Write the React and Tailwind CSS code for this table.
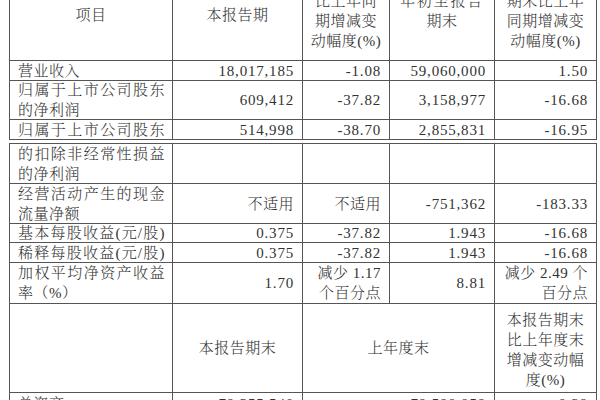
import React from "react";

function Cell({ className = "", children }) {
  return <div className={`border-r border-b border-[#555] ${className}`}>{children}</div>;
}

function Label({ h, lines, top }) {
  return (
    <Cell
      className={`${h} flex flex-col ${top ? "justify-start pt-[1px]" : "justify-center"} pl-[8px] pr-[7px] leading-[20px] tracking-[0.5px] overflow-hidden`}
    >
      {lines.map((l, i) => (
        <div key={i} className={l.full ? "whitespace-nowrap [text-align-last:justify]" : "whitespace-nowrap"}>
          {l.t}
        </div>
      ))}
    </Cell>
  );
}

function Num({ h, children, cjk, top }) {
  return (
    <Cell
      className={`${h} flex ${top ? "items-start pt-[1px]" : "items-center"} justify-end pr-[8px] leading-[20px] whitespace-nowrap ${
        cjk ? "tracking-[0.5px]" : "tracking-[0.8px]"
      }`}
    >
      {children}
    </Cell>
  );
}

function TwoLineRight({ h, a, b }) {
  return (
    <Cell className={`${h} flex flex-col justify-center items-end pr-[8px] leading-[20px] tracking-[0.5px] whitespace-nowrap`}>
      <div>{a}</div>
      <div>{b}</div>
    </Cell>
  );
}

export default function App() {
  return (
    <div className="w-[600px] h-[400px] overflow-hidden bg-white text-[#333] text-[15px] font-light [font-family:'Liberation_Serif','Noto_Serif_CJK_SC','Noto_Sans_CJK_SC',serif]">
      {/* Table 1 */}
      <div className="-mt-[19px] ml-[9px] w-[588px] grid grid-cols-[163px_130px_87px_105px_102px] border-l border-t border-[#555]">
        {/* header */}
        <Cell className="h-[79px] pt-[23px] text-center leading-[20px] tracking-[0.5px]">项目</Cell>
        <Cell className="h-[79px] pt-[23px] text-center leading-[20px] tracking-[0.5px]">本报告期</Cell>
        <Cell className="h-[79px] pt-[9px] text-center leading-[20px] tracking-[0.5px] whitespace-nowrap">
          <div>比上年同</div>
          <div>期增减变</div>
          <div>动幅度(%)</div>
        </Cell>
        <Cell className="h-[79px] pt-[9px] text-center leading-[20px] whitespace-nowrap">
          <div className="tracking-[1.8px]">年初至报告</div>
          <div className="tracking-[0.5px]">期末</div>
        </Cell>
        <Cell className="h-[79px] pt-[9px] text-center leading-[20px] tracking-[0.5px] whitespace-nowrap">
          <div>期末比上年</div>
          <div>同期增减变</div>
          <div>动幅度(%)</div>
        </Cell>

        {/* 营业收入 */}
        <Label h="h-[20px]" lines={[{ t: "营业收入" }]} />
        <Num h="h-[20px]">18,017,185</Num>
        <Num h="h-[20px]">-1.08</Num>
        <Num h="h-[20px]">59,060,000</Num>
        <Num h="h-[20px]">1.50</Num>

        {/* 归属净利润 */}
        <Label h="h-[39px]" lines={[{ t: "归属于上市公司股东", full: true }, { t: "的净利润" }]} />
        <Num h="h-[39px]">609,412</Num>
        <Num h="h-[39px]">-37.82</Num>
        <Num h="h-[39px]">3,158,977</Num>
        <Num h="h-[39px]">-16.68</Num>

        {/* 归属于上市公司股东 */}
        <Label h="h-[20px]" lines={[{ t: "归属于上市公司股东", full: true }]} />
        <Num h="h-[20px]">514,998</Num>
        <Num h="h-[20px]">-38.70</Num>
        <Num h="h-[20px]">2,855,831</Num>
        <Num h="h-[20px]">-16.95</Num>
      </div>

      {/* Table 2 */}
      <div className="mt-[3px] ml-[9px] w-[588px] grid grid-cols-[163px_130px_87px_105px_102px] border-l border-t border-[#555]">
        <Label h="h-[40px]" lines={[{ t: "的扣除非经常性损益", full: true }, { t: "的净利润" }]} />
        <Cell className="h-[40px]" />
        <Cell className="h-[40px]" />
        <Cell className="h-[40px]" />
        <Cell className="h-[40px]" />

        <Label h="h-[40px]" lines={[{ t: "经营活动产生的现金", full: true }, { t: "流量净额" }]} />
        <Num h="h-[40px]" cjk>不适用</Num>
        <Num h="h-[40px]" cjk>不适用</Num>
        <Num h="h-[40px]">-751,362</Num>
        <Num h="h-[40px]">-183.33</Num>

        <Label h="h-[19px]" lines={[{ t: "基本每股收益(元/股)", full: true }]} />
        <Num h="h-[19px]">0.375</Num>
        <Num h="h-[19px]">-37.82</Num>
        <Num h="h-[19px]">1.943</Num>
        <Num h="h-[19px]">-16.68</Num>

        <Label h="h-[20px]" lines={[{ t: "稀释每股收益(元/股)", full: true }]} />
        <Num h="h-[20px]">0.375</Num>
        <Num h="h-[20px]">-37.82</Num>
        <Num h="h-[20px]">1.943</Num>
        <Num h="h-[20px]">-16.68</Num>

        <Label h="h-[41px]" lines={[{ t: "加权平均净资产收益", full: true }, { t: "率（%）" }]} />
        <Num h="h-[41px]">1.70</Num>
        <TwoLineRight h="h-[41px]" a="减少 1.17" b="个百分点" />
        <Num h="h-[41px]">8.81</Num>
        <TwoLineRight h="h-[41px]" a="减少 2.49 个" b="百分点" />

        {/* header 2 */}
        <Cell className="h-[89px]" />
        <Cell className="h-[89px] flex items-center justify-center tracking-[0.5px] leading-[20px]">本报告期末</Cell>
        <Cell className="col-span-2 h-[89px] flex items-center justify-center tracking-[0.5px] leading-[20px]">上年度末</Cell>
        <Cell className="h-[89px] pt-[6px] text-center leading-[20px] tracking-[0.5px] whitespace-nowrap">
          <div>本报告期末</div>
          <div>比上年度末</div>
          <div>增减变动幅</div>
          <div>度(%)</div>
        </Cell>

        {/* 总资产 */}
        <Label h="h-[40px]" top lines={[{ t: "总资产" }]} />
        <Num h="h-[40px]" top>79,355,540</Num>
        <Cell className="col-span-2 h-[40px] flex items-start pt-[1px] justify-end pr-[8px] tracking-[0.8px] leading-[20px]">79,590,059</Cell>
        <Num h="h-[40px]" top>-0.29</Num>
      </div>
    </div>
  );
}
